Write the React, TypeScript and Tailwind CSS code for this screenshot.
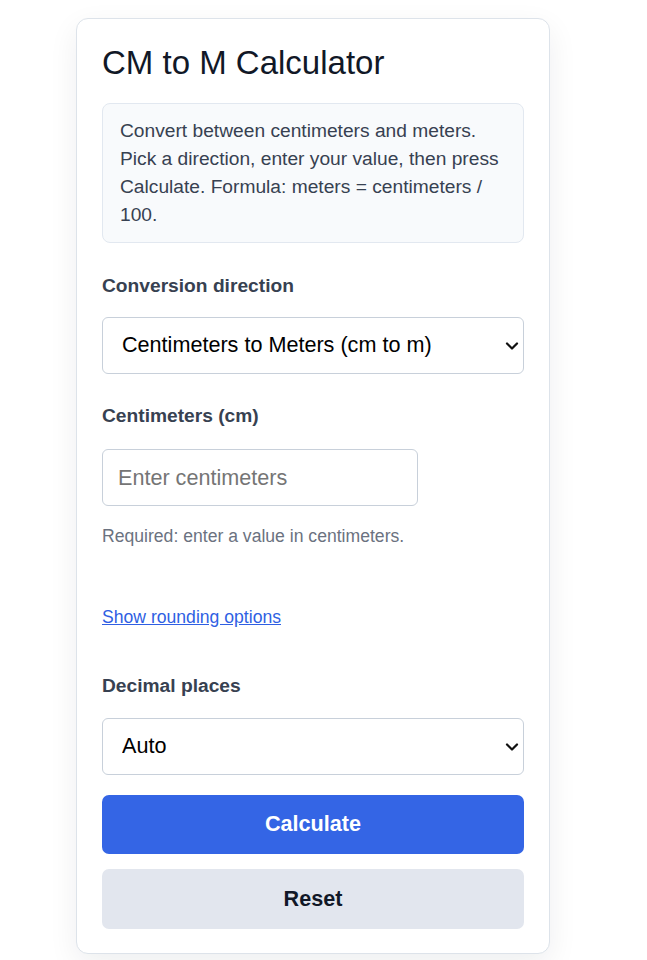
import { useState } from 'react';
import { ChevronDown } from 'lucide-react';

const font = { fontFamily: '"Liberation Sans", Arial, sans-serif' };

function Select({ value, onChange, options, className }: { value: string; onChange: (v: string) => void; options: [string, string][]; className: string }) {
  return (
    <div className={`relative ${className}`}>
      <select
        value={value}
        onChange={(e) => onChange(e.target.value)}
        className="block h-[57px] w-full appearance-none rounded-[6px] border border-[#c8d0da] bg-white pl-[19px] pr-[30px] text-[21.6px] text-black outline-none"
      >
        {options.map(([v, l]) => (
          <option key={v} value={v}>
            {l}
          </option>
        ))}
      </select>
      <ChevronDown size={20} strokeWidth={2.7} className="pointer-events-none absolute right-[2px] top-1/2 -translate-y-1/2 text-[#111]" />
    </div>
  );
}

export default function App() {
  const [direction, setDirection] = useState('cm-m');
  const [value, setValue] = useState('');
  const [places, setPlaces] = useState('auto');

  return (
    <div className="min-h-screen bg-white pt-[18px]" style={font}>
      <div className="ml-[76px] w-[474px] rounded-[12px] border border-[#dde3ea] bg-white px-[25px] pt-[24px] pb-[24px] shadow-[0_10px_30px_rgba(15,23,42,0.07)]">
        <h1 className="text-[33px] leading-[40px] font-normal text-[#111827]">CM to M Calculator</h1>

        <p className="mt-[20px] rounded-[8px] border border-[#e2e8f0] bg-[#f8fafc] px-[17px] py-[13px] text-[19.2px] leading-[28px] text-[#374151]">
          Convert between centimeters and meters. Pick a direction, enter your value, then press Calculate. Formula: meters = centimeters / 100.
        </p>

        <label className="mt-[31px] block text-[19.2px] leading-[23px] font-bold text-[#374151]">Conversion direction</label>
        <Select
          className="mt-[20px]"
          value={direction}
          onChange={setDirection}
          options={[
            ['cm-m', 'Centimeters to Meters (cm to m)'],
            ['m-cm', 'Meters to Centimeters (m to cm)'],
          ]}
        />

        <label className="mt-[30px] block text-[19.2px] leading-[23px] font-bold text-[#374151]">Centimeters (cm)</label>
        <input
          type="number"
          value={value}
          onChange={(e) => setValue(e.target.value)}
          placeholder="Enter centimeters"
          className="mt-[22px] block h-[57px] w-[316px] rounded-[6px] border border-[#c8d0da] bg-white px-[15px] text-[21.6px] text-black placeholder:text-[#757575] outline-none"
        />
        <p className="mt-[18px] text-[17.6px] leading-[24px] text-[#6b7280]">Required: enter a value in centimeters.</p>

        <a href="#" className="mt-[57px] block w-fit text-[17.6px] leading-[24px] text-[#2f5fe3] underline">
          Show rounding options
        </a>

        <label className="mt-[45px] block text-[19.2px] leading-[23px] font-bold text-[#374151]">Decimal places</label>
        <Select
          className="mt-[21px]"
          value={places}
          onChange={setPlaces}
          options={[
            ['auto', 'Auto'],
            ['2', '2'],
            ['4', '4'],
          ]}
        />

        <button className="mt-[20px] flex h-[59px] w-full items-center justify-center rounded-[7px] bg-[#3465e5] text-[21.6px] font-bold text-white">
          Calculate
        </button>
        <button className="mt-[15px] flex h-[60px] w-full items-center justify-center rounded-[7px] bg-[#e2e6ee] text-[21.6px] font-bold text-[#111827]">
          Reset
        </button>
      </div>
    </div>
  );
}
